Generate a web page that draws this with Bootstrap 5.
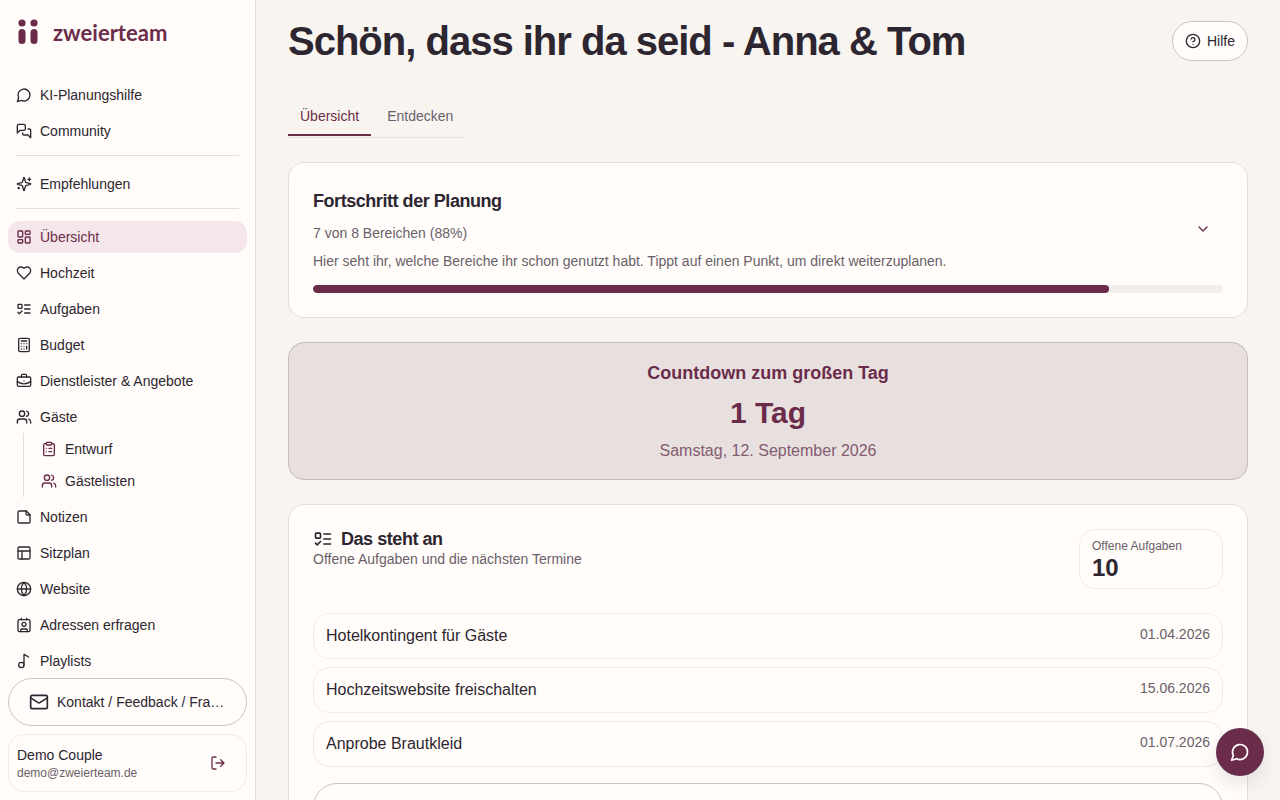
<!DOCTYPE html>
<html lang="de">
<head>
<meta charset="utf-8">
<meta name="viewport" content="width=device-width, initial-scale=1">
<title>zweierteam – Übersicht</title>
<link href="https://cdn.jsdelivr.net/npm/bootstrap@5.3.0/dist/css/bootstrap.min.css" rel="stylesheet">
<style>
  :root { --plum: #6b2c4a; --ink: #2d2630; --soft: #6b5f6a; --paper: #fffcf9; --line: #e3dddb; --line-soft: #f0ebea; --line-strong: #cbc4c5; }
  body { font-family: "Liberation Sans", Arial, sans-serif; font-size: 14px; line-height: 20px; color: var(--ink); background: #f8f5f1; }
  svg { flex: none; fill: none; stroke: currentColor; stroke-width: 2; stroke-linecap: round; stroke-linejoin: round; }
  .i16 { width: 16px; height: 16px; }
  .i20 { width: 20px; height: 20px; }
  .plum { color: var(--plum); }
  .soft { color: var(--soft); }
  .sidebar { flex: 0 0 256px; min-width: 0; background: var(--paper); border-right: 1px solid var(--line); }
  .brand { padding: 16px 16px 0; height: 71px; color: var(--plum); text-decoration: none; gap: 14px; }
  .brand svg { fill: currentColor; stroke: none; width: 23px; height: 32px; }
  .brand span { font: 700 22px/34px Lato, sans-serif; }
  .side-nav { min-height: 0; overflow: hidden; padding: 8px 8px 0; gap: 4px; flex-wrap: nowrap; }
  .side-link { display: flex; flex: none; align-items: center; gap: 8px; height: 32px; padding: 0 8px; border-radius: 12px; color: var(--ink); text-decoration: none; }
  .side-link.active { background: #f4e6eb; color: var(--plum); }
  .side-line { flex: none; height: 1px; margin: 4px 8px 8px; background: var(--line); }
  .side-sub { flex: none; margin: -4px 0 0 15px; padding-left: 9px; border-left: 1px solid var(--line); }
  .side-sub svg { color: var(--plum); }
  .side-foot { padding: 0 8px 8px; gap: 8px; }
  .pill { display: flex; align-items: center; justify-content: center; gap: 8px; border: 1px solid var(--line-strong); border-radius: 24px; background: var(--paper); color: var(--ink); }
  .contact { height: 48px; padding: 0 20px; }
  .account { border: 1px solid var(--line-soft); border-radius: 16px; height: 58px; padding: 0 12px 0 8px; }
  .account small { display: block; font-size: 12px; line-height: 16px; }
  .icon-btn { display: flex; align-items: center; justify-content: center; width: 32px; height: 32px; padding: 0; border: 0; background: none; color: var(--plum); }
  .content { scrollbar-width: none; padding: 16px 32px 32px; min-width: 0; }
  .content::-webkit-scrollbar { display: none; }
  h1 { font-size: 40px; line-height: 50px; font-weight: 700; margin: 0; }
  h2 { font-size: 18px; line-height: 28px; font-weight: 700; margin: 0; }
  h1, .tight { letter-spacing: -0.025em; }
  .help { height: 40px; padding: 0 12px; gap: 6px; }
  .tabs { margin-top: 32px; gap: 4px; width: max-content; padding-bottom: 1px; border-bottom: 1px solid #e8e3e0; }
  .tab { padding: 8px 12px; border: 0; border-bottom: 2px solid transparent; background: none; color: var(--soft); line-height: 20px; }
  .tab.active { color: var(--plum); border-color: var(--plum); }
  .panel { margin-top: 24px; padding: 24px; border: 1px solid var(--line); border-radius: 16px; background: var(--paper); }
  .panel .progress { height: 8px; margin-top: 14px; border-radius: 4px; background: #f1eeec; }
  .progress-bar { background: var(--plum); border-radius: 4px; }
  .countdown { background: #e8e0df; border-color: #c9b8c0; padding: 16px; color: var(--plum); }
  .days { font-size: 30px; line-height: 36px; font-weight: 700; }
  .date-long { font-size: 16px; line-height: 24px; color: #845b70; }
  .stat { width: 144px; padding: 8px 12px 6px; border: 1px solid var(--line-soft); border-radius: 16px; font-size: 12px; line-height: 16px; }
  .stat strong { display: block; font-size: 24px; line-height: 28px; color: var(--ink); }
  .task { display: flex; justify-content: space-between; padding: 10px 12px; border: 1px solid var(--line-soft); border-radius: 16px; color: var(--ink); text-decoration: none; font-size: 16px; line-height: 24px; }
  .task time { font-size: 14px; line-height: 20px; color: var(--soft); }
  .all-tasks { height: 48px; margin-top: 16px; }
  .chat { position: fixed; right: 16px; bottom: 24px; width: 48px; height: 48px; border-radius: 50%; background: var(--plum); color: #fff; box-shadow: 0 8px 16px rgba(45,38,48,.1); }
</style>
</head>
<body>
<div class="d-flex vh-100 overflow-hidden">
  <aside class="sidebar d-flex flex-column">
    <a href="#" class="brand d-flex">
      <svg viewBox="0 0 23 32"><circle cx="6" cy="7" r="3.6"/><circle cx="18" cy="7" r="3.6"/><rect x="2.5" y="13" width="7" height="15" rx="3.5"/><rect x="14.5" y="13" width="7" height="15" rx="3.5"/></svg>
      <span>zweierteam</span>
    </a>
    <nav class="side-nav d-flex flex-column flex-grow-1">
      <a href="#" class="side-link"><svg class="i16" viewBox="0 0 24 24"><path d="M7.9 20A9 9 0 1 0 4 16.1L2 22Z"/></svg>KI-Planungshilfe</a>
      <a href="#" class="side-link"><svg class="i16" viewBox="0 0 24 24"><path d="M14 9a2 2 0 0 1-2 2H6l-4 4V4a2 2 0 0 1 2-2h8a2 2 0 0 1 2 2z"/><path d="M18 9h2a2 2 0 0 1 2 2v11l-4-4h-6a2 2 0 0 1-2-2v-1"/></svg>Community</a>
      <div class="side-line"></div>
      <a href="#" class="side-link"><svg class="i16" viewBox="0 0 24 24"><path d="M9.937 15.5A2 2 0 0 0 8.5 14.063l-6.135-1.582a.5.5 0 0 1 0-.962L8.5 9.936A2 2 0 0 0 9.937 8.5l1.582-6.135a.5.5 0 0 1 .963 0L14.063 8.5A2 2 0 0 0 15.5 9.937l6.135 1.581a.5.5 0 0 1 0 .964L15.5 14.063a2 2 0 0 0-1.437 1.437l-1.582 6.135a.5.5 0 0 1-.963 0z"/><path d="M20 3v4M22 5h-4M4 17v2M5 18H3"/></svg>Empfehlungen</a>
      <div class="side-line"></div>
      <a href="#" class="side-link active" aria-current="page"><svg class="i16" viewBox="0 0 24 24"><rect width="7" height="9" x="3" y="3" rx="1"/><rect width="7" height="5" x="14" y="3" rx="1"/><rect width="7" height="9" x="14" y="12" rx="1"/><rect width="7" height="5" x="3" y="16" rx="1"/></svg>Übersicht</a>
      <a href="#" class="side-link"><svg class="i16" viewBox="0 0 24 24"><path d="M19 14c1.49-1.46 3-3.21 3-5.5A5.5 5.5 0 0 0 16.5 3c-1.76 0-3 .5-4.5 2-1.5-1.5-2.74-2-4.5-2A5.5 5.5 0 0 0 2 8.5c0 2.3 1.5 4.05 3 5.5l7 7Z"/></svg>Hochzeit</a>
      <a href="#" class="side-link"><svg class="i16" viewBox="0 0 24 24"><rect x="3" y="5" width="6" height="6" rx="1"/><path d="m3 17 2 2 4-4M13 6h8M13 12h8M13 18h8"/></svg>Aufgaben</a>
      <a href="#" class="side-link"><svg class="i16" viewBox="0 0 24 24"><rect width="16" height="20" x="4" y="2" rx="2"/><path d="M8 6h8M16 14v4M16 10h.01M12 10h.01M8 10h.01M12 14h.01M8 14h.01M12 18h.01M8 18h.01"/></svg>Budget</a>
      <a href="#" class="side-link"><svg class="i16" viewBox="0 0 24 24"><path d="M12 12h.01M16 6V4a2 2 0 0 0-2-2h-4a2 2 0 0 0-2 2v2M22 13a18.15 18.15 0 0 1-20 0"/><rect width="20" height="14" x="2" y="6" rx="2"/></svg>Dienstleister &amp; Angebote</a>
      <a href="#" class="side-link"><svg class="i16" viewBox="0 0 24 24"><path d="M16 21v-2a4 4 0 0 0-4-4H6a4 4 0 0 0-4 4v2"/><circle cx="9" cy="7" r="4"/><path d="M22 21v-2a4 4 0 0 0-3-3.870M16 3.130a4 4 0 0 1 0 7.750"/></svg>Gäste</a>
      <div class="side-sub">
        <a href="#" class="side-link"><svg class="i16" viewBox="0 0 24 24"><rect width="8" height="4" x="8" y="2" rx="1"/><path d="M16 4h2a2 2 0 0 1 2 2v14a2 2 0 0 1-2 2H6a2 2 0 0 1-2-2V6a2 2 0 0 1 2-2h2M12 11h4M12 16h4M8 11h.01M8 16h.01"/></svg>Entwurf</a>
        <a href="#" class="side-link"><svg class="i16" viewBox="0 0 24 24"><path d="M16 21v-2a4 4 0 0 0-4-4H6a4 4 0 0 0-4 4v2"/><circle cx="9" cy="7" r="4"/><path d="M22 21v-2a4 4 0 0 0-3-3.870M16 3.130a4 4 0 0 1 0 7.750"/></svg>Gästelisten</a>
      </div>
      <a href="#" class="side-link"><svg class="i16" viewBox="0 0 24 24"><path d="M15.5 3H5a2 2 0 0 0-2 2v14a2 2 0 0 0 2 2h14a2 2 0 0 0 2-2V8.500Z"/><path d="M15 3v4a2 2 0 0 0 2 2h4"/></svg>Notizen</a>
      <a href="#" class="side-link"><svg class="i16" viewBox="0 0 24 24"><rect width="18" height="18" x="3" y="3" rx="2"/><path d="M3 9h18M9 21V9"/></svg>Sitzplan</a>
      <a href="#" class="side-link"><svg class="i16" viewBox="0 0 24 24"><circle cx="12" cy="12" r="10"/><path d="M12 2a14.5 14.5 0 0 0 0 20 14.5 14.5 0 0 0 0-20M2 12h20"/></svg>Website</a>
      <a href="#" class="side-link"><svg class="i16" viewBox="0 0 24 24"><path d="M16 2v2M7 22v-2a2 2 0 0 1 2-2h6a2 2 0 0 1 2 2v2M8 2v2"/><circle cx="12" cy="11" r="3"/><rect x="3" y="4" width="18" height="18" rx="2"/></svg>Adressen erfragen</a>
      <a href="#" class="side-link"><svg class="i16" viewBox="0 0 24 24"><circle cx="8" cy="18" r="4"/><path d="M12 18V2l7 4"/></svg>Playlists</a>
    </nav>
    <div class="side-foot d-flex flex-column">
      <button type="button" class="pill contact"><svg class="i20" viewBox="0 0 24 24"><rect width="20" height="16" x="2" y="4" rx="2"/><path d="m22 7-8.970 5.700a1.940 1.940 0 0 1-2.060 0L2 7"/></svg><span class="text-truncate">Kontakt / Feedback / Fragen</span></button>
      <div class="account d-flex align-items-center justify-content-between">
        <div>Demo Couple<small class="soft">demo@zweierteam.de</small></div>
        <button type="button" class="icon-btn" aria-label="Abmelden"><svg class="i16" viewBox="0 0 24 24"><path d="M9 21H5a2 2 0 0 1-2-2V5a2 2 0 0 1 2-2h4M16 17l5-5-5-5M21 12H9"/></svg></button>
      </div>
    </div>
  </aside>

  <main class="content flex-grow-1 overflow-auto">
    <header class="d-flex justify-content-between align-items-center">
      <h1>Schön, dass ihr da seid - Anna &amp; Tom</h1>
      <button type="button" class="pill help"><svg class="i16" viewBox="0 0 24 24"><circle cx="12" cy="12" r="10"/><path d="M9.090 9a3 3 0 0 1 5.830 1c0 2-3 3-3 3M12 17h.01"/></svg>Hilfe</button>
    </header>
    <div class="tabs d-flex" role="tablist">
      <button type="button" class="tab active" role="tab" aria-selected="true">Übersicht</button>
      <button type="button" class="tab" role="tab" aria-selected="false">Entdecken</button>
    </div>

    <section class="panel">
      <div class="d-flex justify-content-between align-items-center">
        <div>
          <h2 class="tight">Fortschritt der Planung</h2>
          <p class="soft mt-2 mb-0">7 von 8 Bereichen (88%)</p>
          <p class="soft mt-2 mb-0">Hier seht ihr, welche Bereiche ihr schon genutzt habt. Tippt auf einen Punkt, um direkt weiterzuplanen.</p>
        </div>
        <button type="button" class="icon-btn me-1" aria-label="Details anzeigen"><svg class="i16" viewBox="0 0 24 24"><path d="m6 9 6 6 6-6"/></svg></button>
      </div>
      <div class="progress" role="progressbar" aria-label="Fortschritt" aria-valuenow="88" aria-valuemin="0" aria-valuemax="100"><div class="progress-bar" style="width:87.5%"></div></div>
    </section>

    <section class="panel countdown text-center">
      <h2>Countdown zum großen Tag</h2>
      <div class="days my-2">1 Tag</div>
      <div class="date-long">Samstag, 12. September 2026</div>
    </section>

    <section class="panel">
      <div class="d-flex justify-content-between align-items-start mb-4">
        <div>
          <div class="d-flex align-items-center gap-2"><svg class="i20" viewBox="0 0 24 24"><rect x="3" y="5" width="6" height="6" rx="1"/><path d="m3 17 2 2 4-4M13 6h8M13 12h8M13 18h8"/></svg><h2 class="tight lh-1">Das steht an</h2></div>
          <div class="soft">Offene Aufgaben und die nächsten Termine</div>
        </div>
        <div class="stat soft">Offene Aufgaben<strong>10</strong></div>
      </div>
      <div class="d-flex flex-column gap-2">
        <a href="#" class="task">Hotelkontingent für Gäste<time>01.04.2026</time></a>
        <a href="#" class="task">Hochzeitswebsite freischalten<time>15.06.2026</time></a>
        <a href="#" class="task">Anprobe Brautkleid<time>01.07.2026</time></a>
      </div>
      <button type="button" class="pill all-tasks w-100" aria-label="Alle Aufgaben"></button>
    </section>
  </main>
</div>
<button type="button" class="chat icon-btn" aria-label="Chat öffnen"><svg class="i20" viewBox="0 0 24 24"><path d="M7.900 20A9 9 0 1 0 4 16.100L2 22Z"/></svg></button>
</body>
</html>
